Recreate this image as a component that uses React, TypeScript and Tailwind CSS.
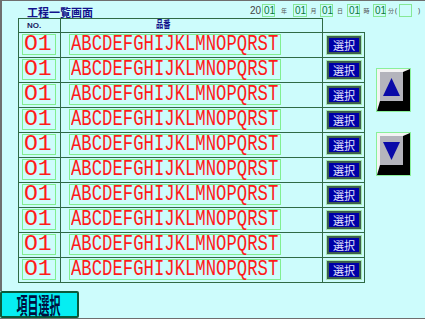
import React from "react";

const LINE = "border-[#2f6a45]";

function DateBox({ text, w = "w-[13px]" }: { text: string; w?: string }) {
  return (
    <div
      className={`${w} h-[13px] border border-[#86e896] text-[10px] leading-[11px] text-[#0a7a3a] pl-[1px] font-["Liberation_Sans",sans-serif]`}
    >
      {text}
    </div>
  );
}

function Lbl({ t }: { t: string }) {
  return (
    <span className='text-[6px] leading-[13px] text-[#555] font-["Noto_Sans_CJK_JP",sans-serif]'>
      {t}
    </span>
  );
}

function SelectBtn() {
  return (
    <div className="w-[36px] h-[20px] border border-[#a6e8b0]">
      <div className="w-full h-full border-2 border-[#3d5f4d] bg-[#0000a8] flex items-center justify-center">
        <span className='text-[11px] leading-none text-[#e8e8ff] font-["Noto_Sans_CJK_JP",sans-serif]'>
          選択
        </span>
      </div>
    </div>
  );
}

function Row() {
  return (
    <div className={`flex h-[25px] border-b ${LINE}`}>
      <div className={`w-[43px] border-l border-r ${LINE} pt-[1px] pl-[3px]`}>
        <div className="w-[34px] h-[21px] border border-[#80ee90] flex items-center pl-[1px]">
          <span className='text-[22px] leading-none text-[#ff1a1a] font-["Liberation_Mono",monospace] whitespace-nowrap [transform:scaleX(1.05)] origin-left shrink-0'>
            O1
          </span>
        </div>
      </div>
      <div className={`w-[262px] border-r ${LINE} pt-[1px] pl-[8px]`}>
        <div className="w-[212px] h-[21px] border border-[#80ee90] flex items-center pl-[1px]">
          <span className='text-[22px] leading-none text-[#ff1a1a] font-["Liberation_Mono",monospace] whitespace-nowrap [transform:scaleX(0.785)] origin-left shrink-0'>
            ABCDEFGHIJKLMNOPQRST
          </span>
        </div>
      </div>
      <div className={`w-[42px] border-r ${LINE} flex items-center pl-[3px]`}>
        <SelectBtn />
      </div>
    </div>
  );
}

function ArrowBtn({ up }: { up: boolean }) {
  return (
    <div className="w-[35px] h-[44px] border border-[#8af09a]">
      <div className="w-full h-full bg-[#b4b4bc] border-t-[3px] border-l-[3px] border-t-[#f4f4f4] border-l-[#f4f4f4] border-r-[7px] border-b-[10px] border-r-black border-b-black flex items-center justify-center">
        <svg width="17" height="18" viewBox="0 0 17 18">
          {up ? (
            <polygon points="8.5,0 17,18 0,18" fill="#0a0aa8" />
          ) : (
            <polygon points="0,0 17,0 8.5,18" fill="#0a0aa8" />
          )}
        </svg>
      </div>
    </div>
  );
}

export default function App() {
  const rows = Array.from({ length: 10 });
  return (
    <div className="w-[425px] h-[319px] bg-[#cdfcfc] flex flex-col overflow-hidden">
      <div className="h-[291px] border-t border-l-2 border-[#6e6e6e] flex flex-col">
        {/* top bar */}
        <div className="h-[17px] flex">
          <div className="pl-[25px] flex items-end">
            <span className='text-[11px] leading-[12px] font-bold text-[#12128c] font-["Noto_Sans_CJK_JP",sans-serif]'>
              工程一覧画面
            </span>
          </div>
          <div className="ml-[157px] pt-[3px] flex items-start">
            <span className='text-[10px] leading-[13px] text-[#444] font-["Liberation_Sans",sans-serif] w-[12px]'>
              20
            </span>
            <DateBox text="01" />
            <div className="w-[18px] flex justify-center">
              <Lbl t="年" />
            </div>
            <DateBox text="01" w="w-[14px]" />
            <div className="w-[13px] flex justify-center">
              <Lbl t="月" />
            </div>
            <DateBox text="01" />
            <div className="w-[14px] flex justify-center">
              <Lbl t="日" />
            </div>
            <DateBox text="01" />
            <div className="w-[13px] flex justify-center">
              <Lbl t="時" />
            </div>
            <DateBox text="01" />
            <div className="w-[13px] flex justify-center items-start">
              <Lbl t="分" />
              <span className="text-[7px] leading-[13px] text-[#444] ml-[1px]">(</span>
            </div>
            <DateBox text="" />
            <span className="text-[7px] leading-[13px] text-[#444] ml-[6px]">)</span>
          </div>
        </div>
        {/* main */}
        <div className="flex pl-[16px] gap-[11px]">
          <div className="w-[347px] flex flex-col">
            <div className={`flex h-[15px]`}>
              <div className={`w-[43px] border-t border-l border-r border-b ${LINE} pl-[8px] flex items-center`}>
                <span className='text-[8px] leading-none font-bold text-[#1a1a60] font-["Liberation_Sans",sans-serif]'>
                  NO.
                </span>
              </div>
              <div className={`w-[262px] border-t border-r border-b ${LINE} pl-[95px] flex items-start`}>
                <span className='text-[10px] leading-[10px] font-bold text-[#12128c] font-["Noto_Sans_CJK_JP",sans-serif] [transform:scaleX(0.72)] origin-left'>
                  品番
                </span>
              </div>
              <div className={`w-[42px] border-b ${LINE}`} />
            </div>
            {rows.map((_, i) => (
              <Row key={i} />
            ))}
          </div>
          <div className="flex flex-col pt-[50px] gap-[20px]">
            <ArrowBtn up />
            <ArrowBtn up={false} />
          </div>
        </div>
      </div>
      <div className="h-[28px] border-b border-[#6e6e6e] flex items-start">
        <div className="w-[79px] h-[27px] bg-[#06eef2] border-2 border-[#0b5a3a] rounded-[2px] flex items-center justify-center pr-[2px]">
          <span className='text-[11px] leading-[11px] font-bold text-[#001040] font-["Noto_Sans_CJK_JP",sans-serif] [transform:scaleY(2.1)] whitespace-nowrap'>
            項目選択
          </span>
        </div>
      </div>
    </div>
  );
}
